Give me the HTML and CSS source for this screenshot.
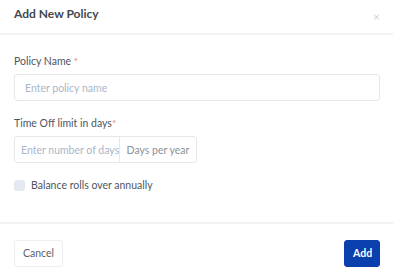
FILE: index.html
```html
<!DOCTYPE html>
<html lang="en">
<head>
  <meta charset="UTF-8" />
  <meta name="viewport" content="width=device-width, initial-scale=1.0" />
  <title>Add New Policy</title>
  <link rel="stylesheet" href="styles.css">
</head>
<body>
  <div class="modal">
    <div class="modal-header">
      <h2>Add New Policy</h2>
      <span class="close">&times;</span>
    </div>

    <div class="modal-body">
      <div class="field">
        <label>Policy Name <span class="req">*</span></label>
        <input type="text" class="input" placeholder="Enter policy name" />
      </div>

      <div class="field">
        <label>Time Off limit in days<span class="req">*</span></label>
        <div class="input-group">
          <input type="text" class="input days" placeholder="Enter number of days" />
          <span class="addon">Days per year</span>
        </div>
      </div>

      <label class="check">
        <span class="box"></span>
        Balance rolls over annually
      </label>
    </div>

    <div class="modal-footer">
      <button class="btn btn-light">Cancel</button>
      <button class="btn btn-primary">Add</button>
    </div>
  </div>
</body>
</html>
```

FILE: styles.css
```css
body {
  margin: 0;
  padding: 0;
  background-color: #ffffff;
  color: #3b4450;
  font-family: Lato, 'Open Sans', sans-serif;
  font-size: 10.5px;
}

.modal {
  width: 393px;
  height: 280px;
  display: flex;
  flex-direction: column;
}

.modal-header {
  display: flex;
  justify-content: space-between;
  align-items: center;
  height: 33px;
  padding: 0 14px;
  border-bottom: 2px solid #f1f2f4;
}

.modal-header h2 {
  margin: 0;
  font-size: 12px;
  font-weight: 700;
  color: #43474e;
  position: relative;
  top: -3px;
}

.close {
  color: #d0d3d8;
  font-size: 12px;
  margin-right: -1px;
}

.modal-body {
  flex: 1;
  padding: 20px 13px 0 14px;
}

.field {
  margin-bottom: 16px;
}

.field label {
  display: block;
  margin-bottom: 7px;
  color: #50565f;
}

.req {
  color: #f07a7a;
  font-size: 10px;
}

.input {
  box-sizing: border-box;
  width: 100%;
  height: 27px;
  padding: 0 10px;
  border: 1px solid #e4e7eb;
  border-radius: 3px;
  font-family: inherit;
  font-size: 10.5px;
  outline: none;
}

.input::placeholder {
  color: #aab6c8;
}

.input-group {
  display: flex;
  width: 183px;
  height: 27px;
  border: 1px solid #e4e7eb;
  border-radius: 3px;
  box-sizing: border-box;
}

.input-group .days {
  width: 105px;
  height: 25px;
  border: none;
  border-right: 1px solid #e4e7eb;
  border-radius: 3px 0 0 3px;
  padding: 0 0 0 6px;
}

.addon {
  flex: 1;
  display: flex;
  align-items: center;
  justify-content: center;
  color: #8b929c;
}

.check {
  display: flex;
  align-items: center;
  gap: 6px;
  margin-top: 2px;
  color: #50565f;
}

.box {
  width: 11px;
  height: 11px;
  border-radius: 3px;
  background-color: #e3e8f2;
}

.modal-footer {
  display: flex;
  justify-content: space-between;
  align-items: center;
  height: 56px;
  padding: 0 13px 0 14px;
  border-top: 2px solid #f1f2f4;
}

.btn {
  height: 27px;
  border-radius: 3px;
  font-family: inherit;
  font-size: 10.5px;
  padding: 0 8px;
  margin-top: 2px;
}

.btn-light {
  width: 49px;
  background-color: #ffffff;
  border: 1px solid #eceef1;
  color: #5b616b;
}

.btn-primary {
  width: 36px;
  background-color: #0a3fae;
  border: 1px solid #0a3fae;
  color: #ffffff;
  font-weight: 700;
}
```
